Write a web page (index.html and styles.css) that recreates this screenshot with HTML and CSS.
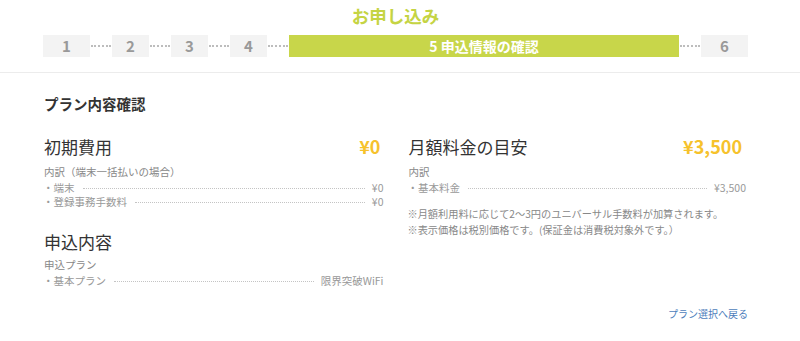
FILE: index.html
```html
<!DOCTYPE html>
<html lang="ja">
<head>
  <meta charset="UTF-8">
  <meta name="viewport" content="width=device-width, initial-scale=1">
  <title>お申し込み</title>
  <link rel="stylesheet" href="styles.css">
</head>
<body>
  <div class="page-head">
    <div class="wrap">
      <h1 class="title">お申し込み</h1>
      <!-- ステップ表示 -->
      <div class="steps">
        <div class="step step-first">1</div>
        <div class="step-line"></div>
        <div class="step">2</div>
        <div class="step-line"></div>
        <div class="step">3</div>
        <div class="step-line"></div>
        <div class="step">4</div>
        <div class="step-line"></div>
        <div class="step step-current">5 申込情報の確認</div>
        <div class="step-line"></div>
        <div class="step step-last">6</div>
      </div>
    </div>
  </div>

  <div class="wrap content">
    <h2 class="section-title">プラン内容確認</h2>

    <div class="columns">
      <div class="col">
        <div class="block">
          <div class="block-head">
            <h3>初期費用</h3>
            <span class="price">¥0</span>
          </div>
          <div class="sub-label">内訳（端末一括払いの場合）</div>
          <div class="row"><span>・端末</span><span class="leader"></span><span>¥0</span></div>
          <div class="row"><span>・登録事務手数料</span><span class="leader"></span><span>¥0</span></div>
        </div>

        <div class="block block-apply">
          <div class="block-head">
            <h3>申込内容</h3>
          </div>
          <div class="sub-label">申込プラン</div>
          <div class="row"><span>・基本プラン</span><span class="leader"></span><span>限界突破WiFi</span></div>
        </div>
      </div>

      <div class="col">
        <div class="block">
          <div class="block-head">
            <h3>月額料金の目安</h3>
            <span class="price price-month">¥3,500</span>
          </div>
          <div class="sub-label">内訳</div>
          <div class="row"><span>・基本料金</span><span class="leader"></span><span class="row-value">¥3,500</span></div>
          <div class="notes">
            <p>※月額利用料に応じて2〜3円のユニバーサル手数料が加算されます。</p>
            <p>※表示価格は税別価格です。(保証金は消費税対象外です。）</p>
          </div>
        </div>
      </div>
    </div>

    <div class="back">
      <a href="#" class="back-link">プラン選択へ戻る</a>
    </div>
  </div>
</body>
</html>
```

FILE: styles.css
```css
/* 基本 */
body {
  margin: 0;
  font-family: "Noto Sans CJK JP", "Noto Sans", sans-serif;
  background-color: #fff;
  color: #333;
}
.wrap {
  width: 705px;
  margin: 0 52px 0 43px;
}

/* ヘッダー */
.page-head {
  padding-top: 4px;
  padding-bottom: 15px;
  border-bottom: 1px solid #ececec;
}
.title {
  margin: 0;
  font-size: 17.5px;
  line-height: 24px;
  font-weight: bold;
  color: #c5d443;
  text-align: center;
}
.steps {
  display: flex;
  align-items: center;
  margin-top: 7px;
  height: 22px;
}
.step {
  width: 37px;
  height: 22px;
  line-height: 22px;
  background-color: #f3f3f3;
  color: #999;
  font-size: 15px;
  font-weight: bold;
  text-align: center;
}
.step-first,
.step-last {
  width: 47px;
}
.step-current {
  flex: 1;
  background-color: #c8d64a;
  color: #fff;
  font-size: 14px;
}
.step-line {
  width: 20px;
  margin: 0 1px;
  border-top: 2px dotted #bdbdbd;
}

/* 内容 */
.section-title {
  margin: 21px 0 0 1px;
  font-size: 14.5px;
  line-height: 20px;
  font-weight: bold;
  color: #333;
}
.columns {
  display: grid;
  grid-template-columns: 1fr 1fr;
  column-gap: 24px;
  margin-top: 20px;
}
.block-head {
  display: flex;
  justify-content: space-between;
  align-items: center;
  height: 24px;
}
.block-head h3 {
  margin: 0 0 0 1px;
  font-size: 17px;
  font-weight: normal;
  color: #333;
}
.price {
  font-size: 18px;
  font-weight: bold;
  color: #f6c22c;
  padding-right: 3px;
}
.price-month {
  padding-right: 6px;
}
.sub-label {
  margin-top: 6px;
  margin-left: 1px;
  font-size: 10.5px;
  line-height: 16px;
  color: #888;
}
.row {
  display: flex;
  align-items: center;
  font-size: 10.5px;
  line-height: 14px;
  color: #999;
}
.sub-label + .row {
  margin-top: 1px;
}
.leader {
  flex: 1;
  margin: 0 7px 0 8px;
  border-bottom: 1px dotted #c4c4c4;
}
.row-value {
  padding-right: 2px;
}
.block-apply {
  margin-top: 20px;
}
.block-apply .sub-label {
  margin-top: 4px;
}
.notes {
  margin-top: 11px;
}
.notes p {
  margin: 0;
  font-size: 10.2px;
  line-height: 15.5px;
  color: #888;
}

/* 戻るリンク */
.back {
  margin-top: 11px;
  text-align: right;
}
.back-link {
  font-size: 10px;
  line-height: 16px;
  color: #4d7dbb;
  text-decoration: none;
}
```
